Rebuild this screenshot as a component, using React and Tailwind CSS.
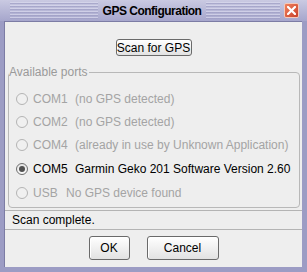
import React from "react";

function Radio({ checked }) {
  if (checked) {
    return (
      <div className="w-[12px] h-[12px] rounded-full border border-[#6e6e6e] bg-gradient-to-b from-[#e4e4e4] to-[#fafafa] flex items-center justify-center shrink-0">
        <div className="w-[6px] h-[6px] rounded-full bg-[#505050]" />
      </div>
    );
  }
  return (
    <div className="w-[12px] h-[12px] rounded-full border border-[#b4b4b4] bg-[#f0f0f0] shrink-0" />
  );
}

function Row({ h, name, nameW, desc, checked, disabled }) {
  return (
    <div className={`flex items-center ${h}`}>
      <Radio checked={checked} />
      <span className={`ml-[5px] ${nameW} ${disabled ? "text-[#a4a4a4]" : "text-black"}`}>{name}</span>
      <span className={`${disabled ? "text-[#a4a4a4]" : "text-black"} whitespace-nowrap`}>{desc}</span>
    </div>
  );
}

function Btn({ children, w, h }) {
  return (
    <div
      className={`${w} ${h} flex items-center justify-center rounded-[3px] border border-[#6a6a6a] bg-gradient-to-b from-[#ffffff] to-[#e2e2e2] shadow-[inset_1px_1px_0_#ffffff] text-black`}
    >
      {children}
    </div>
  );
}

export default function App() {
  return (
    <div className="w-[307px] h-[272px] flex flex-col bg-[#9c9cc4] font-['Liberation_Sans',Arial,sans-serif] text-[12px] leading-none overflow-hidden">
      {/* Title bar */}
      <div className="h-[21px] shrink-0 flex items-center bg-gradient-to-b from-[#cacae2] to-[#a6a6cc]">
        <div className="ml-[10px] w-[88px] h-[17px] bg-[repeating-linear-gradient(to_bottom,#dadaee_0px,#dadaee_1px,#9e9ec4_1px,#9e9ec4_2px,transparent_2px,transparent_3px)] opacity-70" />
        <div className="flex-1 text-center font-bold text-[12px] tracking-[-0.5px] text-black">GPS Configuration</div>
        <div className="w-[74px] h-[17px] bg-[repeating-linear-gradient(to_bottom,#dadaee_0px,#dadaee_1px,#9e9ec4_1px,#9e9ec4_2px,transparent_2px,transparent_3px)] opacity-70" />
        <div className="ml-[4px] mr-[8px] w-[15px] h-[15px] rounded-[2px] border border-[#f4c8b8] bg-gradient-to-br from-[#f0805c] to-[#c8402a] flex items-center justify-center">
          <svg width="9" height="9" viewBox="0 0 9 9">
            <path d="M1 1 L8 8 M8 1 L1 8" stroke="white" strokeWidth="2.2" strokeLinecap="square" />
          </svg>
        </div>
      </div>

      {/* Body */}
      <div className="flex-1 ml-[4px] mr-[5px] mb-[5px] bg-[#eeeeee] border-l border-t border-[#7c7ca4] flex flex-col">
        <div className="flex justify-center pt-[17px]">
          <Btn w="w-[76px]" h="h-[17px]">Scan for GPS</Btn>
        </div>

        <div className="relative mt-[16px] ml-[3px] mr-[2px] h-[136px] border border-[#b8b8b8] rounded-[4px] pl-[7px] pt-[14px]">
          <span className="absolute left-[0px] top-[-7px] bg-[#eeeeee] pr-[1px] text-[#9a9a9a]">Available ports</span>
          <Row h="h-[23px]" name="COM1" nameW="w-[42px]" desc="(no GPS detected)" disabled />
          <Row h="h-[23px]" name="COM2" nameW="w-[42px]" desc="(no GPS detected)" disabled />
          <Row h="h-[24px]" name="COM4" nameW="w-[42px]" desc="(already in use by Unknown Application)" disabled />
          <Row h="h-[24px]" name="COM5" nameW="w-[42px]" desc="Garmin Geko 201 Software Version 2.60" checked />
          <Row h="h-[23px]" name="USB" nameW="w-[33px]" desc="No GPS device found" disabled />
        </div>

        <div className="mt-[2px] h-[20px] border-t border-b border-[#b4b4b4] flex items-center pl-[7px] text-black">
          Scan complete.
        </div>

        <div className="mt-[6px] flex justify-center gap-[17px]">
          <Btn w="w-[41px]" h="h-[24px]">OK</Btn>
          <Btn w="w-[72px]" h="h-[24px]">Cancel</Btn>
        </div>
      </div>
    </div>
  );
}
